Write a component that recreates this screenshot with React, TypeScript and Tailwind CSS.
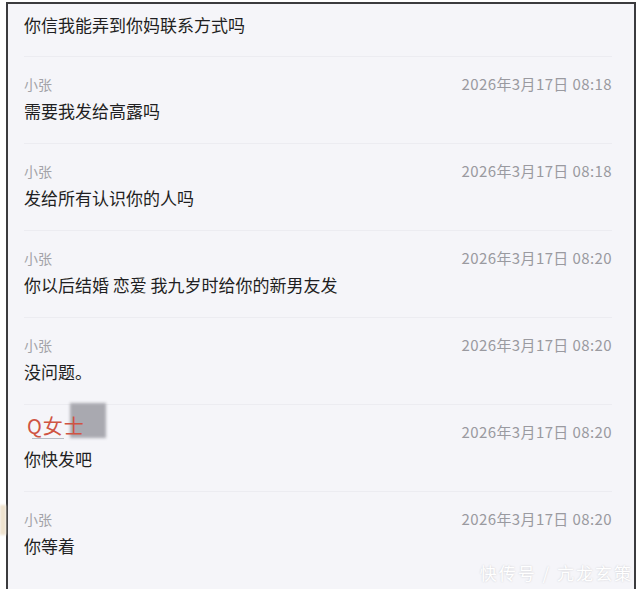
const font = { fontFamily: '"Noto Sans CJK SC", "Noto Sans", sans-serif' };

type Msg = { name: string; time: string; text: string; lady?: boolean };

const messages: Msg[] = [
  { name: "小张", time: "2026年3月17日 08:18", text: "需要我发给高露吗" },
  { name: "小张", time: "2026年3月17日 08:18", text: "发给所有认识你的人吗" },
  { name: "小张", time: "2026年3月17日 08:20", text: "你以后结婚 恋爱 我九岁时给你的新男友发" },
  { name: "小张", time: "2026年3月17日 08:20", text: "没问题。" },
  { name: "Q女士", time: "2026年3月17日 08:20", text: "你快发吧", lady: true },
  { name: "小张", time: "2026年3月17日 08:20", text: "你等着" },
];

function Row({ m }: { m: Msg }) {
  return (
    <div className="border-t border-[#ececf1] pt-[16px] pb-[20px]">
      <div className="flex h-[22px] items-center justify-between">
        {m.lady ? (
          <div className="relative -translate-y-[6px] flex items-center">
            <span className="relative z-10 pl-[3px] text-[20px] leading-none text-[#cf5443] tracking-[1px]">Q女士</span>
            <span className="absolute left-[46px] top-[-13px] h-[35px] w-[36px] bg-[#a9a9b0] blur-[1.5px]" />
            <span className="absolute left-[8px] top-[22px] h-px w-[32px] bg-[#b8bcc4]" />
          </div>
        ) : (
          <span className="text-[14px] text-[#a3a3a8]">{m.name}</span>
        )}
        <span className="text-[15px] tracking-[0.4px] text-[#9a9aa0]">{m.time}</span>
      </div>
      <div className="mt-[4px] flex h-[24px] items-center text-[17px] text-[#1f1f22]">{m.text}</div>
    </div>
  );
}

export default function App() {
  return (
    <div className="relative h-[589px] w-[640px] overflow-hidden bg-white" style={font}>
      <div className="absolute left-0 top-[505px] h-[30px] w-[6px] bg-[#efe3cf] blur-[1px]" />
      <div className="ml-[6px] mt-[2px] h-[600px] w-[630px] border-2 border-[#3b3b3e] bg-[#f5f5f9]">
        <div className="pl-[16px] pr-[22px]">
          <div className="pt-[9px] pb-[19px]">
            <div className="flex h-[24px] items-center text-[17px] text-[#1f1f22]">你信我能弄到你妈联系方式吗</div>
          </div>
          {messages.map((m, i) => (
            <Row key={i} m={m} />
          ))}
        </div>
      </div>
      <div className="absolute bottom-[4px] right-[7px] text-[17px] tracking-[2px] text-white [text-shadow:0_0_2px_rgba(0,0,0,0.18)]">
        快传号 / 亢龙玄策
      </div>
    </div>
  );
}
